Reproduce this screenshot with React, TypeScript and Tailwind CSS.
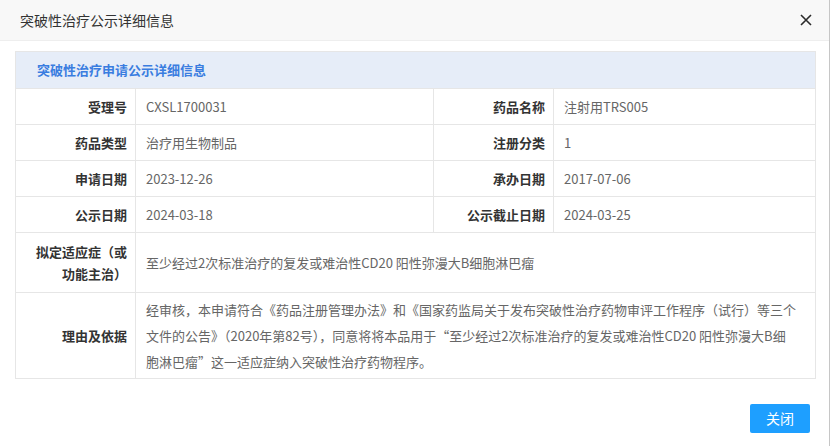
const font = { fontFamily: '"Noto Sans CJK SC", "Microsoft YaHei", sans-serif' };

type Pair = { label: string; value: string };

const rows: [Pair, Pair][] = [
  [
    { label: '受理号', value: 'CXSL1700031' },
    { label: '药品名称', value: '注射用TRS005' },
  ],
  [
    { label: '药品类型', value: '治疗用生物制品' },
    { label: '注册分类', value: '1' },
  ],
  [
    { label: '申请日期', value: '2023-12-26' },
    { label: '承办日期', value: '2017-07-06' },
  ],
  [
    { label: '公示日期', value: '2024-03-18' },
    { label: '公示截止日期', value: '2024-03-25' },
  ],
];

function Label({ children, h = 'h-[36px]' }: { children: React.ReactNode; h?: string }) {
  return (
    <div
      className={`${h} flex items-center justify-end pr-[8px] pl-[10px] text-right font-bold text-[#333] border-r border-b border-[#e6e6e6]`}
    >
      {children}
    </div>
  );
}

function Value({ children, h = 'h-[36px]', span = '' }: { children: React.ReactNode; h?: string; span?: string }) {
  return (
    <div className={`${h} ${span} flex items-center pl-[10px] pr-[8px] text-[#666] border-r border-b border-[#e6e6e6]`}>
      {children}
    </div>
  );
}

export default function App() {
  return (
    <div className="w-[831px] h-[446px] bg-white overflow-hidden text-[14px]" style={font}>
      <div className="w-[830px] h-full border-r border-[#c6c6c6] flex flex-col">
        {/* title bar */}
        <div className="h-[41px] shrink-0 bg-[#f8f8f8] border-b border-[#eeeeee] flex items-center justify-between pl-[20px] pr-[17px]">
          <span className="text-[#333]">突破性治疗公示详细信息</span>
          <svg width="12" height="12" viewBox="0 0 12 12">
            <path d="M1 1L11 11M11 1L1 11" stroke="#2b2b2b" strokeWidth="1.6" />
          </svg>
        </div>

        <div className="flex-1 flex flex-col pt-[10px] pl-[15px] pr-[14px]">
          <div className="w-[801px] text-[13px] border-l border-t border-[#e6e6e6] grid grid-cols-[120px_298px_120px_262px]">
            <div className="col-span-4 h-[37px] bg-[#e6edf8] border-r border-b border-[#e6e6e6] flex items-center pl-[21px] font-bold text-[#3a7de0]">
              突破性治疗申请公示详细信息
            </div>

            {rows.map(([a, b]) => (
              <>
                <Label key={a.label}>{a.label}</Label>
                <Value>{a.value}</Value>
                <Label>{b.label}</Label>
                <Value>{b.value}</Value>
              </>
            ))}

            <Label h="h-[60px]">
              <span className="leading-[22px]">
                拟定适应症（或
                <br />
                功能主治）
              </span>
            </Label>
            <Value h="h-[60px]" span="col-span-3">
              至少经过2次标准治疗的复发或难治性CD20 阳性弥漫大B细胞淋巴瘤
            </Value>

            <Label h="h-[86px]">理由及依据</Label>
            <Value h="h-[86px]" span="col-span-3">
              <div className="leading-[26px] whitespace-nowrap">
                <div>经审核，本申请符合《药品注册管理办法》和《国家药监局关于发布突破性治疗药物审评工作程序（试行）等三个</div>
                <div>文件的公告》（2020年第82号），同意将将本品用于“至少经过2次标准治疗的复发或难治性CD20 阳性弥漫大B细</div>
                <div>胞淋巴瘤”这一适应症纳入突破性治疗药物程序。</div>
              </div>
            </Value>
          </div>

          <div className="flex justify-end mt-[25px] pr-[5px]">
            <button className="w-[60px] h-[29px] bg-[#1e9fff] text-white rounded-[2px] flex items-center justify-center">
              关闭
            </button>
          </div>
        </div>
      </div>
    </div>
  );
}
